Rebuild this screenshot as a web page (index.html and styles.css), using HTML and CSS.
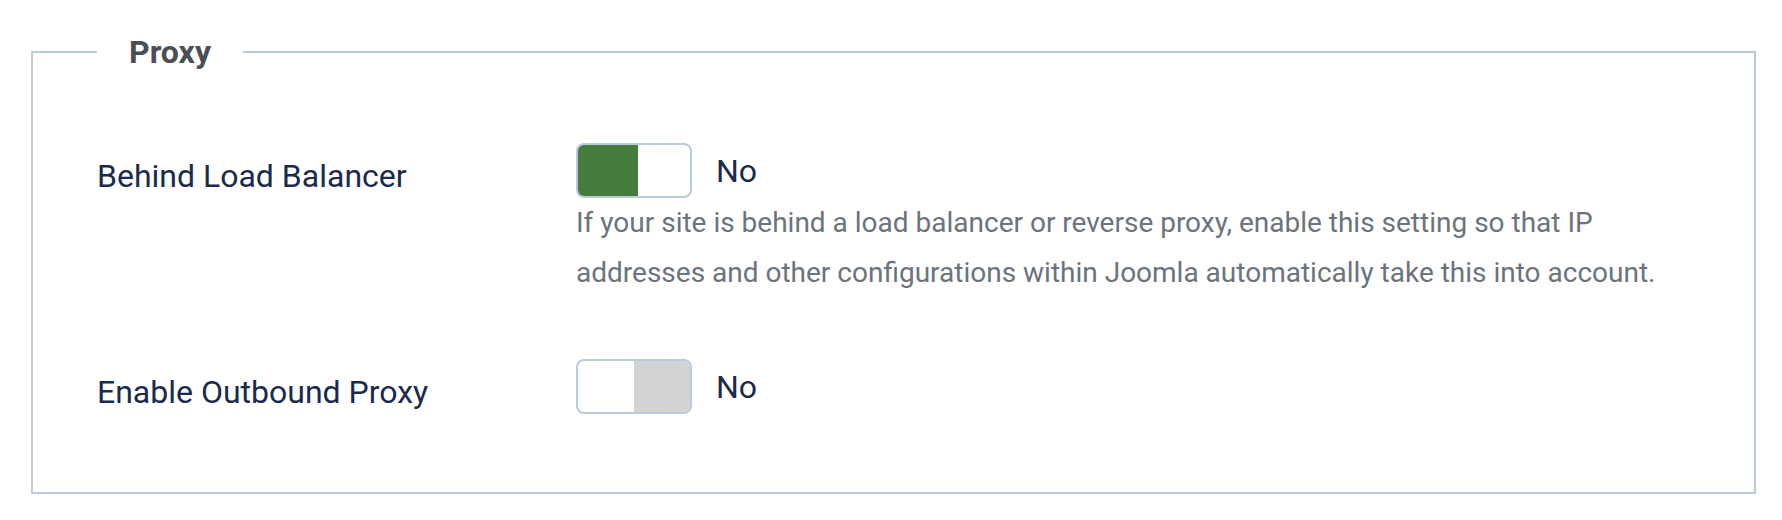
FILE: index.html
```html
<!DOCTYPE html>
<html lang="en">
<head>
<meta charset="utf-8">
<title>Proxy</title>
<link rel="stylesheet" href="styles.css">
</head>
<body>
<div class="page">
  <fieldset class="options">
    <legend class="options-legend">Proxy</legend>

    <div class="control-group">
      <div class="control-label">Behind Load Balancer</div>
      <div class="controls">
        <div class="switch-line">
          <span class="switcher" role="switch" aria-checked="false">
            <span class="half half-green"></span>
            <span class="half"></span>
          </span>
          <span class="switch-text">No</span>
        </div>
        <div class="form-text">If your site is behind a load balancer or reverse proxy, enable this setting so that IP addresses and other configurations within Joomla automatically take this into account.</div>
      </div>
    </div>

    <div class="control-group control-group-last">
      <div class="control-label">Enable Outbound Proxy</div>
      <div class="controls">
        <div class="switch-line">
          <span class="switcher" role="switch" aria-checked="false">
            <span class="half"></span>
            <span class="half half-grey"></span>
          </span>
          <span class="switch-text">No</span>
        </div>
      </div>
    </div>
  </fieldset>
</div>
</body>
</html>
```

FILE: styles.css
```css
html, body {
  margin: 0;
  padding: 0;
  background: #ffffff;
}

body {
  font-family: Roboto, "Liberation Sans", Arial, sans-serif;
  color: #1a2a4c;
}

.page {
  padding: 28px 26px 0 31px;
}

.options {
  margin: 0;
  border: 2px solid #bccade;
  padding: 67px 0 76px 64px;
  min-width: 0;
}

.options-legend {
  padding: 0 32px;
  font-size: 32px;
  line-height: 48px;
  font-weight: 700;
  color: #4a4f55;
}

.control-group {
  display: flex;
  align-items: flex-start;
  margin-bottom: 61px;
}

.control-group-last {
  margin-bottom: 0;
}

.control-label {
  width: 479px;
  flex: none;
  padding-top: 9px;
  font-size: 32px;
  line-height: 48px;
  color: #1a2a4c;
}

.controls {
  flex: 1;
  max-width: 1110px;
}

.switch-line {
  display: flex;
  align-items: center;
}

.switcher {
  display: flex;
  width: 112px;
  height: 51px;
  border: 2px solid #bccade;
  border-radius: 8px;
  overflow: hidden;
  background: #ffffff;
}

.half {
  flex: 1;
}

.half-green {
  flex: none;
  width: 60px;
  background: #457c3b;
}

.half-grey {
  background: #d3d3d3;
}

.switch-text {
  margin-left: 24px;
  font-size: 32px;
  line-height: 48px;
  color: #1a2a4c;
}

.form-text {
  margin-top: 0;
  font-size: 28px;
  line-height: 50px;
  color: #6b737c;
}
```
